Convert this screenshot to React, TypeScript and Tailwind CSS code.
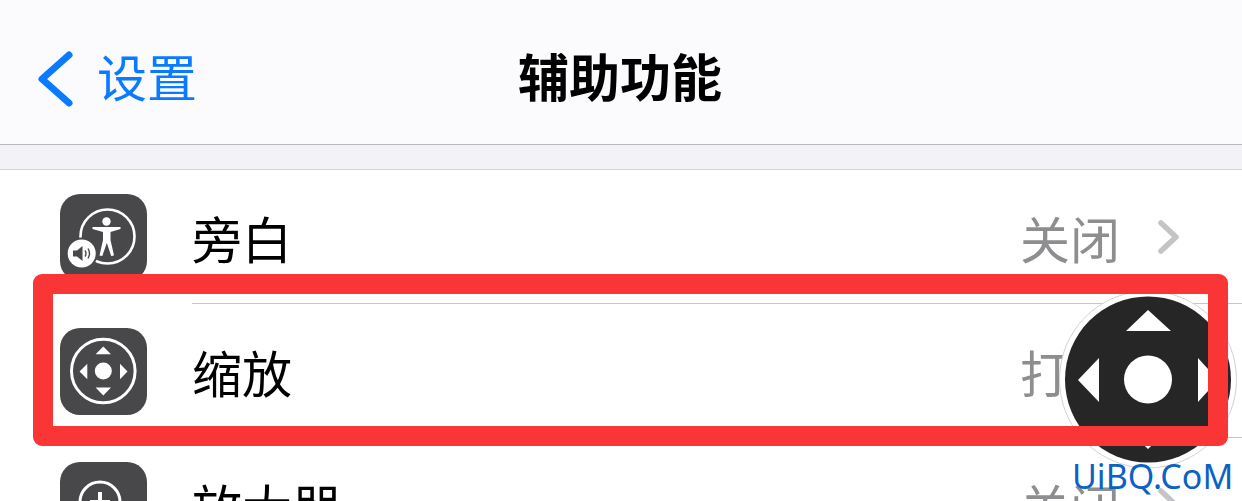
const rows = [
  { label: "旁白", value: "关闭", icon: <VoiceOverIcon /> },
  { label: "缩放", value: "打开", icon: <ZoomIcon /> },
  { label: "放大器", value: "关闭", icon: <MagnifierIcon /> },
];

function VoiceOverIcon() {
  return (
    <svg viewBox="0 0 87 87" className="w-full h-full">
      <circle cx="47.5" cy="42.5" r="27" fill="none" stroke="#fff" strokeWidth="2.6" />
      <circle cx="46.5" cy="27.5" r="4.2" fill="#fff" />
      <path d="M32.5 33 L60.5 33 L60.5 35 L50.5 38 L50.5 46 L54 61.5 L51.2 62 L46.8 49 L42.3 62 L39.5 61.5 L43 46 L43 38 L32.5 35 Z" fill="#fff" />
      <circle cx="21.7" cy="59.5" r="16" fill="#48484a" />
      <circle cx="21.7" cy="59.5" r="14" fill="#fff" />
      <path d="M13 56.5 H17 L22.5 52 V67 L17 62.5 H13 Z" fill="#48484a" />
      <path d="M25 56.5 Q27 59.5 25 62.5 M28 54.5 Q31 59.5 28 64.5" fill="none" stroke="#48484a" strokeWidth="1.4" />
    </svg>
  );
}

function ZoomIcon() {
  return (
    <svg viewBox="0 0 87 87" className="w-full h-full">
      <circle cx="43.3" cy="43" r="31.8" fill="none" stroke="#fff" strokeWidth="3" />
      <circle cx="43.3" cy="43" r="8.5" fill="#fff" />
      <path d="M43.3 18.5 L51 26.3 H35.6 Z M43.3 67.5 L51 59.5 H35.6 Z M19.5 43.5 L27.3 35.8 V51.2 Z M67.5 43.5 L60 35.8 V51.2 Z" fill="#fff" />
    </svg>
  );
}

function MagnifierIcon() {
  return (
    <svg viewBox="0 0 87 87" className="w-full h-full">
      <circle cx="40" cy="40" r="20" fill="none" stroke="#fff" strokeWidth="3" />
      <path d="M40 30 V50 M30 40 H50" fill="none" stroke="#fff" strokeWidth="4" />
    </svg>
  );
}

function Chevron() {
  return (
    <svg viewBox="0 0 24 36" className="w-6 h-9 shrink-0">
      <path d="M4 4 L19 18 L4 32" fill="none" stroke="#c4c4c7" strokeWidth="5.5" strokeLinecap="round" strokeLinejoin="round" />
    </svg>
  );
}

export default function App() {
  return (
    <div className="relative w-[1242px] h-[501px] overflow-hidden bg-white font-['Noto_Sans_CJK_SC',sans-serif]">
      {/* nav bar */}
      <div className="grid grid-cols-[1fr_auto_1fr] items-center h-[145px] pt-[6px] pl-[37px] pr-[39px] bg-[#fbfbfd] border-b border-[#b9b9bd]">
        <div className="flex items-center gap-[23px] text-[#0a7bff]">
          <svg viewBox="0 0 37 58" className="w-[37px] h-[58px] mt-[8px] shrink-0">
            <path d="M32 5 L5 29 L32 53" fill="none" stroke="#0a7bff" strokeWidth="7" strokeLinecap="round" strokeLinejoin="round" />
          </svg>
          <span className="text-[50px] leading-none">设置</span>
        </div>
        <div className="text-[51px] leading-none font-bold text-black">辅助功能</div>
        <div />
      </div>

      {/* section gap */}
      <div className="h-[25px] bg-[#f2f2f7] border-b border-[#d4d4d8]" />

      {/* rows */}
      <div>
        {rows.map((row) => (
          <div key={row.label} className="flex items-center h-[134px] pl-[60px]">
            <div className="w-[87px] h-[87px] rounded-[20px] bg-[#48484a] shrink-0">{row.icon}</div>
            <div className="flex flex-1 items-center h-full ml-[45px] pr-[61px] border-b border-[#c6c6c8]">
              <span className="flex-1 text-[50px] leading-none text-black">{row.label}</span>
              <span className="text-[50px] leading-none text-[#8e8e90]">{row.value}</span>
              <span className="ml-[37px]"><Chevron /></span>
            </div>
          </div>
        ))}
      </div>

      {/* assistive joystick */}
      <svg viewBox="0 0 180 180" className="absolute left-[1058px] top-[290px] w-[180px] h-[180px]">
        <circle cx="90" cy="89.5" r="88.5" fill="#fff" stroke="#d2d2d2" strokeWidth="1" />
        <circle cx="90" cy="89.5" r="83" fill="#262626" />
        <circle cx="90" cy="89.5" r="24" fill="#fff" />
        <path d="M90 20 L113 41 H68 Z M90 159 L112 138 H68 Z M20 90 L41 68 V112 Z M160 90 L140 68 V112 Z" fill="#fff" />
      </svg>

      {/* red annotation frame */}
      <div className="absolute left-[33px] top-[274px] w-[1195px] h-[172px] rounded-[9px] border-[20px] border-[#f93535]" />

      {/* watermark */}
      <div className="absolute left-[1072px] top-[456px] text-[34px] leading-[40px] font-['Noto_Sans',sans-serif] text-[#0b62c4]">UiBQ.CoM</div>
    </div>
  );
}
